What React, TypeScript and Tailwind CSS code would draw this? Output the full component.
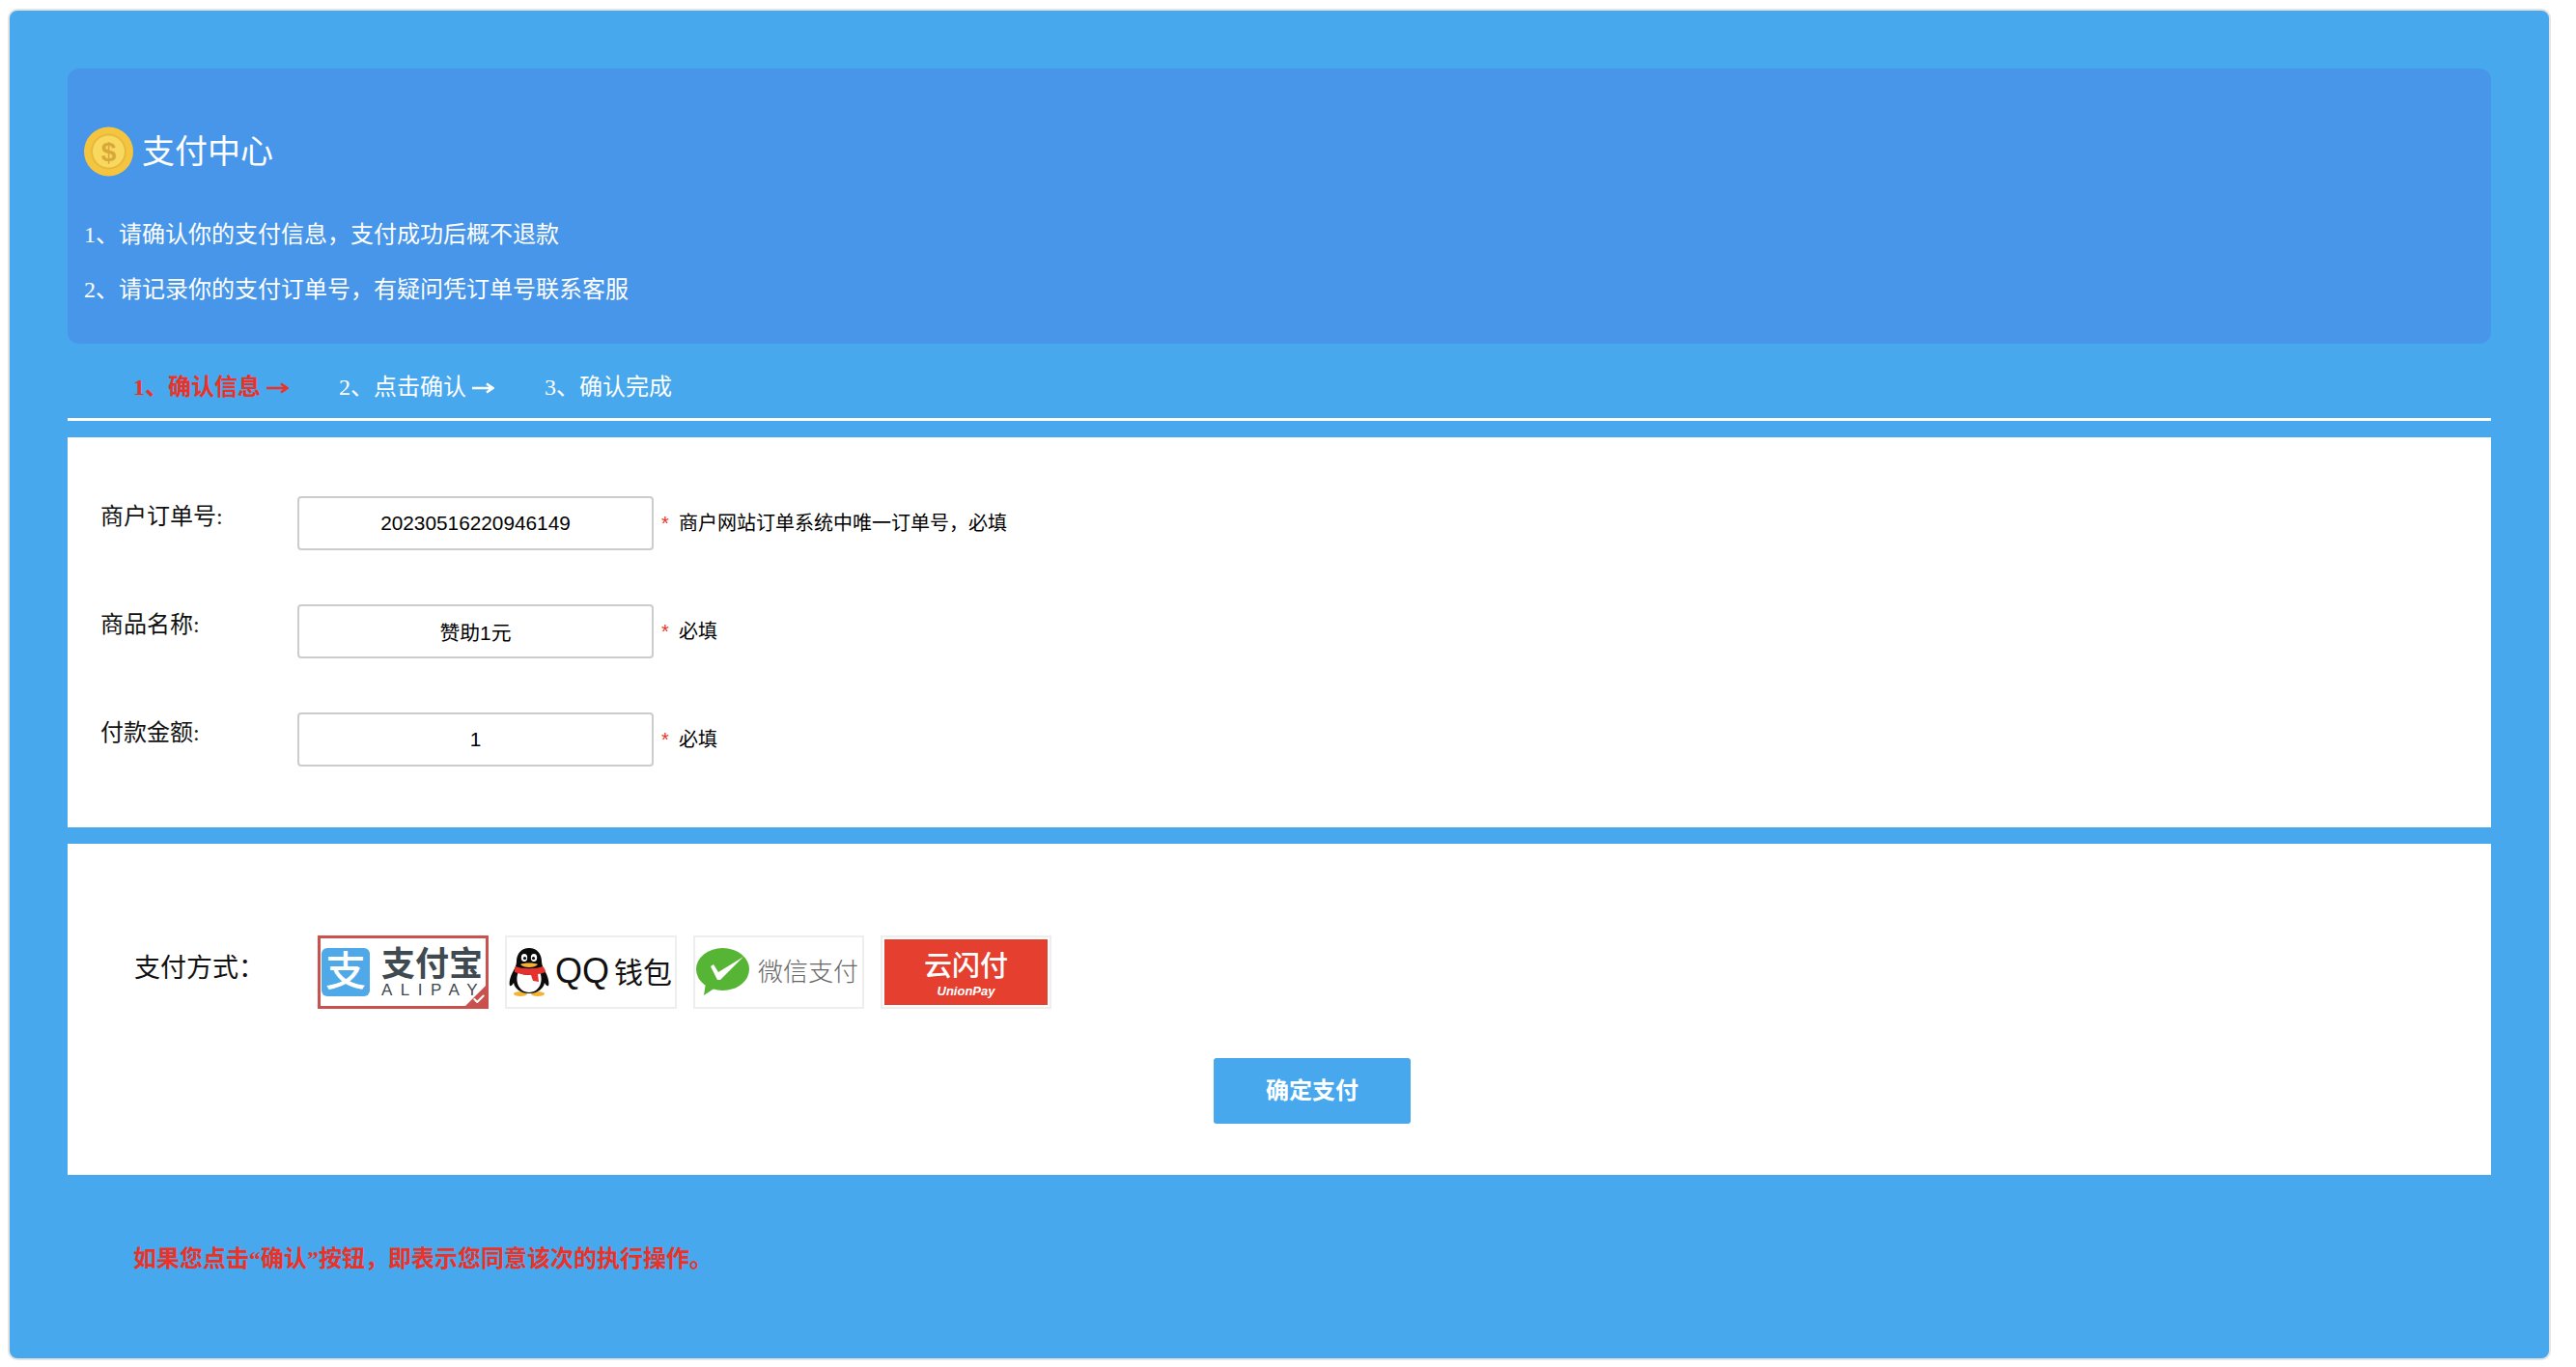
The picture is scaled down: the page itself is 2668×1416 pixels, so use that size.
import { Check } from "lucide-react";

const serif = "font-['Liberation_Serif','Noto_Sans_CJK_SC',serif]";
const sans = "font-['Liberation_Sans','Noto_Sans_CJK_SC',sans-serif]";

function Coin() {
  return (
    <svg width="51" height="52" viewBox="0 0 51 52" className="shrink-0">
      <circle cx="25.5" cy="26" r="25.5" fill="#f5c53f" />
      <circle cx="25.5" cy="26" r="18.5" fill="#e6b83c" />
      <circle cx="25.5" cy="26" r="16.5" fill="#f8d85e" />
      <text x="25.5" y="36" textAnchor="middle" fontSize="28" fontWeight="700" fill="#d8a838" fontFamily="Liberation Sans">
        $
      </text>
    </svg>
  );
}

function Penguin() {
  return (
    <svg width="42" height="50" viewBox="0 0 42 50" className="shrink-0">
      <ellipse cx="12" cy="47.5" rx="7" ry="2.5" fill="#f5b335" />
      <ellipse cx="30" cy="47.5" rx="7" ry="2.5" fill="#f5b335" />
      <path d="M21 0c8 0 13 6 13 14 0 4 2 7 4 11 3 6 4 11 3 14-1 1-3-1-4-3-1 6-7 11-16 11S6 42 5 36c-1 2-3 4-4 3-1-3 0-8 3-14 2-4 4-7 4-11C8 6 13 0 21 0z" fill="#0b0b0b" />
      <path d="M10 25c4 4 18 4 22 0 3 5 3 20-11 21C7 45 7 30 10 25z" fill="#fff" />
      <path d="M7 19c7 3 21 3 28 0 2 2 3 4 3 6-3 1-6 2-8 2l1 8-6-1-2-6c-6 0-12-1-17-3 0-2 0-4 1-6z" fill="#e5322d" />
      <ellipse cx="16" cy="10" rx="3.2" ry="4" fill="#fff" />
      <ellipse cx="26" cy="10" rx="3.2" ry="4" fill="#fff" />
      <circle cx="16.5" cy="10.5" r="1.6" fill="#0b0b0b" />
      <circle cx="25.5" cy="10.5" r="1.6" fill="#0b0b0b" />
      <path d="M12 17c3-2 15-2 18 0-3 4-15 4-18 0z" fill="#f5b335" />
    </svg>
  );
}

function WechatMark() {
  return (
    <svg width="55" height="50" viewBox="0 0 55 50" className="shrink-0">
      <ellipse cx="27.5" cy="22" rx="27.5" ry="22" fill="#57b535" />
      <path d="M10 36l-2 13 12-8z" fill="#57b535" />
      <path d="M15 19l3-2 5 8 26-16-24 24-3 0z" fill="#fff" />
    </svg>
  );
}

function Arrow() {
  return (
    <svg width="23" height="12" viewBox="0 0 23 12" className="ml-[6px] inline-block align-[1px]">
      <path d="M0 6h19M15 1.500L21.500 6 15 10.500" fill="none" stroke="currentColor" strokeWidth="2.500" />
    </svg>
  );
}

function Field({ label, value, hint }: { label: string; value: string; hint: string }) {
  return (
    <div className="flex h-14 items-center">
      <label className={`${serif} mt-[1px] h-10 w-[204px] shrink-0 self-start text-[24px] leading-10 text-[#111]`}>{label}</label>
      <input
        readOnly
        value={value}
        className={`${sans} h-14 w-[369px] rounded-[4px] border-2 border-[#ccc] bg-white text-center text-[20.8px] text-black`}
      />
      <span className={`${sans} ml-2 w-[18px] text-[20px] text-[#ee3124]`}>*</span>
      <span className={`${serif} text-[20px] text-black`}>{hint}</span>
    </div>
  );
}

export default function App() {
  return (
    <div className="min-h-[1416px] bg-white pt-[9px] pr-[26px] pl-[8px]">
      <div className="h-[1400px] rounded-[10px] border-2 border-[#e4e4e4] bg-[#48a8ee] p-[60px]">
        <div className="h-[285px] rounded-[12px] bg-[#4796ea] pt-[58px] pl-[17px] text-white">
          <div className="flex items-center gap-[10px]">
            <Coin />
            <h1 className={`${serif} -ml-[1px] pt-[3px] text-[34px] leading-[52px]`}>支付中心</h1>
          </div>
          <div className={`${serif} mt-[31px] text-[24px] leading-[57px]`}>
            <p>1、请确认你的支付信息，支付成功后概不退款</p>
            <p>2、请记录你的支付订单号，有疑问凭订单号联系客服</p>
          </div>
        </div>

        <div className={`${serif} box-border flex h-[80px] gap-[52px] border-b-[3px] border-white pt-[27px] pl-[68px] text-[24px] leading-9 text-white`}>
          <span className="font-bold text-[#ee3124]">
            1、确认信息
            <Arrow />
          </span>
          <span>
            2、点击确认
            <Arrow />
          </span>
          <span>3、确认完成</span>
        </div>

        <div className="mt-[17px] flex h-[404px] flex-col gap-14 bg-white pt-[61px] pl-[34px]">
          <Field label="商户订单号:" value="20230516220946149" hint="商户网站订单系统中唯一订单号，必填" />
          <Field label="商品名称:" value="赞助1元" hint="必填" />
          <Field label="付款金额:" value="1" hint="必填" />
        </div>

        <div className="mt-[17px] h-[343px] bg-white pt-[95px]">
          <div className="flex items-center pl-[69px]">
            <span className={`${serif} mb-[8px] w-[190px] text-[27px] text-[#111]`}>支付方式：</span>
            <div className="flex gap-[17px]">
              <div className="relative flex h-[76px] w-[177px] items-center overflow-hidden border-[3px] border-[#c9524f] bg-white pl-[1px]">
                <div className={`${sans} flex h-[50px] w-[50px] shrink-0 items-center justify-center rounded-[6px] bg-[#4fa9e8] text-[42px] leading-none font-medium text-white`}>
                  支
                </div>
                <div className="ml-[12px] flex shrink-0 flex-col">
                  <span className={`${sans} text-[35px] leading-[35px] font-bold whitespace-nowrap text-[#3f4a50]`}>支付宝</span>
                  <span className={`${sans} mt-[1px] text-[17px] leading-[17px] font-medium tracking-[8.500px] whitespace-nowrap text-[#3f4a50]`}>ALIPAY</span>
                </div>
                <div className="absolute -right-[3px] -bottom-[3px] h-[27px] w-[27px] bg-[#c9524f] [clip-path:polygon(100%_0,100%_100%,0_100%)]" />
                <Check className="absolute right-[0px] bottom-[0px] h-[14px] w-[14px] text-white" strokeWidth={3.5} />
              </div>

              <div className="flex h-[76px] w-[178px] items-center border-[2px] border-[#eee] bg-white pl-[2px]">
                <Penguin />
                <span className={`${sans} ml-[6px] text-[30px] whitespace-nowrap text-[#111]`}>
                  <span className="mr-[5px] text-[36px] leading-none">QQ</span>钱包
                </span>
              </div>

              <div className="flex h-[76px] w-[177px] items-center border-[2px] border-[#eee] bg-white pl-[1px]">
                <WechatMark />
                <span className={`${sans} ml-[9px] text-[26px] font-light whitespace-nowrap text-[#666]`}>微信支付</span>
              </div>

              <div className="h-[76px] w-[177px] border-[2px] border-[#eee] bg-white p-[2px]">
                <div className="flex h-full flex-col items-center justify-center bg-[#e53f30] pt-[6px] text-white">
                  <span className={`${sans} text-[29px] leading-[32px] font-medium`}>云闪付</span>
                  <span className={`${sans} mt-[2px] text-[13px] leading-[16px] font-bold italic`}>UnionPay</span>
                </div>
              </div>
            </div>
          </div>
          <button className={`${sans} mt-[51px] ml-[1187px] h-[68px] w-[204px] rounded-[3px] bg-[#48a8ee] text-[24px] font-bold text-white`}>
            确定支付
          </button>
        </div>

        <p className={`${serif} mt-[69px] pl-[68px] text-[24px] leading-9 font-bold text-[#ee3124]`}>
          如果您点击“确认”按钮，即表示您同意该次的执行操作。
        </p>
      </div>
    </div>
  );
}
